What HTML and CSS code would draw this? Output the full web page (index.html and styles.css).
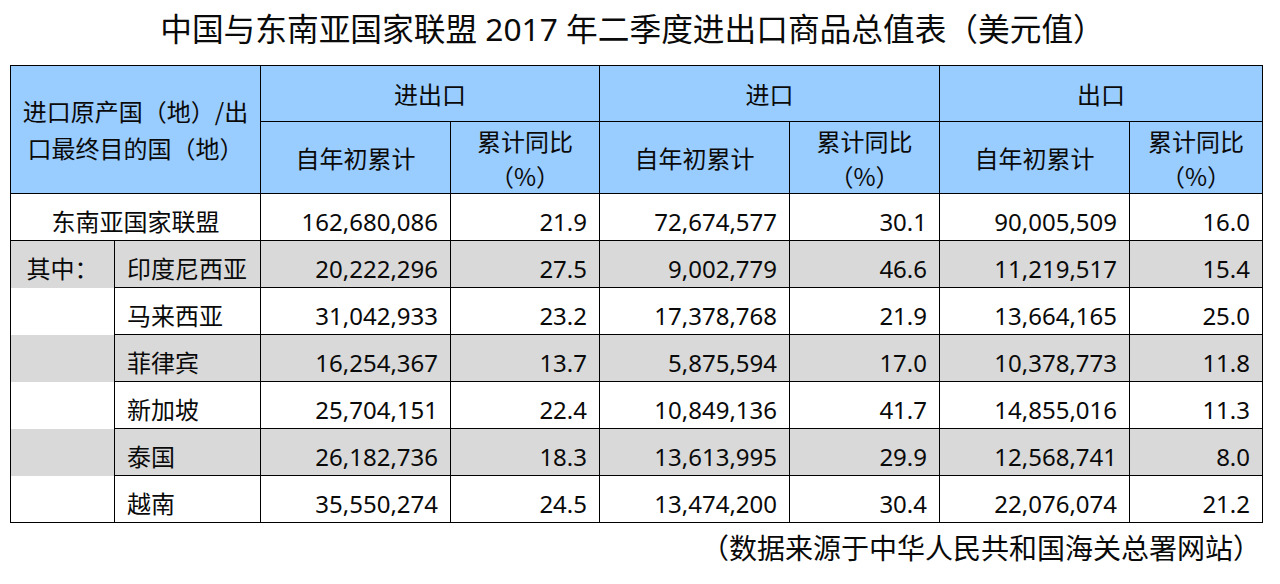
FILE: index.html
```html
<!DOCTYPE html>
<html lang="zh-CN">
<head>
<meta charset="utf-8">
<title>中国与东南亚国家联盟 2017 年二季度进出口商品总值表</title>
<link rel="stylesheet" href="styles.css">
</head>
<body>
<div class="page">
  <h1 class="title">中国与东南亚国家联盟 2017 年二季度进出口商品总值表（美元值）</h1>
  <table class="trade">
    <colgroup>
      <col class="c-sub"><col class="c-name">
      <col class="c-num"><col class="c-pct">
      <col class="c-num"><col class="c-pct2">
      <col class="c-num"><col class="c-pct3">
    </colgroup>
    <thead>
      <tr class="h1">
        <th colspan="2" rowspan="2" class="corner">进口原产国（地）/出<br>口最终目的国（地）</th>
        <th colspan="2">进出口</th>
        <th colspan="2">进口</th>
        <th colspan="2">出口</th>
      </tr>
      <tr class="h2">
        <th>自年初累计</th><th>累计同比<br>（%）</th>
        <th>自年初累计</th><th>累计同比<br>（%）</th>
        <th>自年初累计</th><th>累计同比<br>（%）</th>
      </tr>
    </thead>
    <tbody>
      <tr>
        <td colspan="2" class="total">东南亚国家联盟</td>
        <td class="n">162,680,086</td><td class="n">21.9</td>
        <td class="n">72,674,577</td><td class="n">30.1</td>
        <td class="n">90,005,509</td><td class="n">16.0</td>
      </tr>
      <tr class="alt">
        <td class="sub first">其中：</td><td class="name">印度尼西亚</td>
        <td class="n">20,222,296</td><td class="n">27.5</td>
        <td class="n">9,002,779</td><td class="n">46.6</td>
        <td class="n">11,219,517</td><td class="n">15.4</td>
      </tr>
      <tr>
        <td class="sub"></td><td class="name">马来西亚</td>
        <td class="n">31,042,933</td><td class="n">23.2</td>
        <td class="n">17,378,768</td><td class="n">21.9</td>
        <td class="n">13,664,165</td><td class="n">25.0</td>
      </tr>
      <tr class="alt">
        <td class="sub"></td><td class="name">菲律宾</td>
        <td class="n">16,254,367</td><td class="n">13.7</td>
        <td class="n">5,875,594</td><td class="n">17.0</td>
        <td class="n">10,378,773</td><td class="n">11.8</td>
      </tr>
      <tr>
        <td class="sub"></td><td class="name">新加坡</td>
        <td class="n">25,704,151</td><td class="n">22.4</td>
        <td class="n">10,849,136</td><td class="n">41.7</td>
        <td class="n">14,855,016</td><td class="n">11.3</td>
      </tr>
      <tr class="alt">
        <td class="sub"></td><td class="name">泰国</td>
        <td class="n">26,182,736</td><td class="n">18.3</td>
        <td class="n">13,613,995</td><td class="n">29.9</td>
        <td class="n">12,568,741</td><td class="n">8.0</td>
      </tr>
      <tr>
        <td class="sub last"></td><td class="name">越南</td>
        <td class="n">35,550,274</td><td class="n">24.5</td>
        <td class="n">13,474,200</td><td class="n">30.4</td>
        <td class="n">22,076,074</td><td class="n">21.2</td>
      </tr>
    </tbody>
  </table>
  <p class="source">（数据来源于中华人民共和国海关总署网站）</p>
</div>
</body>
</html>
```

FILE: styles.css
```css
html, body {
  margin: 0;
  padding: 0;
  background: #ffffff;
}

body {
  font-family: "Noto Sans", "Noto Sans CJK SC", sans-serif;
  color: #0a0a0a;
  text-spacing-trim: space-all;
}

.page {
  width: 1251px;
  padding-left: 10px;
}

.title {
  margin: 0;
  height: 65px;
  box-sizing: border-box;
  padding: 9px 6px 0 0;
  font-size: 31.7px;
  font-weight: normal;
  line-height: 40px;
  text-align: center;
  white-space: nowrap;
}

.trade {
  width: 1251px;
  table-layout: fixed;
  border-collapse: collapse;
  font-size: 24px;
}

.c-sub { width: 104px; }
.c-name { width: 146px; }
.c-num { width: 190px; }
.c-pct { width: 149px; }
.c-pct2 { width: 150px; }
.c-pct3 { width: 133px; }

.trade th,
.trade td {
  border: 1px solid #000000;
  padding: 0;
  overflow: hidden;
  white-space: nowrap;
}

.trade th {
  background: #99ccff;
  font-family: "Noto Sans CJK SC", "Noto Sans", sans-serif;
  font-weight: normal;
  text-align: center;
  line-height: 35px;
}

.h1 th { height: 55px; }
.h2 th { height: 71px; }

.trade th.corner {
  line-height: 37px;
  padding-bottom: 2px;
}

.trade td {
  height: 36px;
  line-height: 30px;
  padding-top: 10px;
  vertical-align: middle;
}

.alt td { background: #d9d9d9; }

.total {
  text-align: center;
}

.trade td.name {
  text-align: left;
  padding-left: 12px;
}

.trade td.n {
  text-align: right;
  padding-right: 12px;
}

.trade td.sub {
  text-align: center;
  border-top: none;
  border-bottom: none;
}

.trade td.sub.first { border-top: 1px solid #000000; }
.trade td.sub.last { border-bottom: 1px solid #000000; }

.source {
  margin: 6px 0 0 0;
  padding-right: 0;
  font-size: 28px;
  line-height: 38px;
  text-align: right;
}
```
